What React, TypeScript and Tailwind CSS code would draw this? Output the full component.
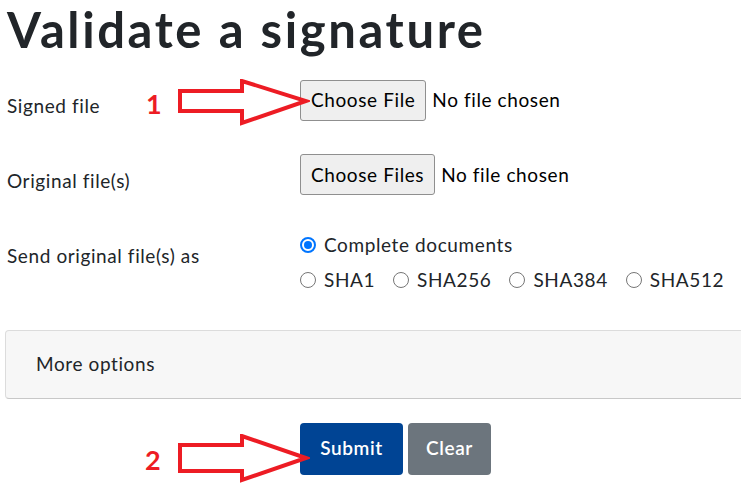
import React from "react";

const font = { fontFamily: '"Lato", "Noto Sans", sans-serif' };

function Radio({ checked, label }: { checked?: boolean; label: string }) {
  return (
    <span className="flex items-center gap-[8px]">
      {checked ? (
        <span className="flex h-[16px] w-[16px] items-center justify-center rounded-full border-2 border-[#0075ff] bg-white">
          <span className="h-[8px] w-[8px] rounded-full bg-[#0075ff]" />
        </span>
      ) : (
        <span className="h-[16px] w-[16px] rounded-full border border-[#767676] bg-white" />
      )}
      <span>{label}</span>
    </span>
  );
}

function FileInput({ label }: { label: string }) {
  return (
    <div className="flex items-center gap-[6px]">
      <span className="flex h-[41px] items-center rounded-[3px] border border-[#8f8f8f] bg-[#efefef] px-[10px] text-black">
        {label}
      </span>
      <span className="text-black">No file chosen</span>
    </div>
  );
}

function Arrow({ tall }: { tall?: boolean }) {
  const pts = tall
    ? "2,11 64,11 64,2 128,24 64,46 64,37 2,37"
    : "2,12 64,12 64,2 128,22 64,44 64,32 2,32";
  return (
    <svg width="132" height="50" viewBox="0 0 132 50">
      <polygon points={pts} fill="none" stroke="#ed1c24" strokeWidth="4" strokeLinejoin="miter" />
    </svg>
  );
}

export default function App() {
  return (
    <div className="relative flex h-[483px] w-[741px] flex-col overflow-hidden bg-white text-[19px] tracking-[0.6px] text-[#212529]" style={font}>
      <h1 className="ml-[7px] text-[49px] font-bold leading-[59px] tracking-[2.6px]">Validate a signature</h1>

      <div className="ml-[7px] mt-[21px] flex">
        <div className="w-[293px] pt-[12px]">Signed file</div>
        <FileInput label="Choose File" />
      </div>

      <div className="ml-[7px] mt-[33px] flex">
        <div className="w-[293px] pt-[13px]">Original file(s)</div>
        <FileInput label="Choose Files" />
      </div>

      <div className="ml-[7px] mt-[35px] flex">
        <div className="w-[293px] pt-[11px]">Send original file(s) as</div>
        <div className="flex flex-col gap-[7px] text-[19px] leading-[28px]">
          <Radio checked label="Complete documents" />
          <div className="flex gap-[18px]">
            <Radio label="SHA1" />
            <Radio label="SHA256" />
            <Radio label="SHA384" />
            <Radio label="SHA512" />
          </div>
        </div>
      </div>

      <div className="ml-[5px] mt-[36px] flex h-[69px] w-[760px] shrink-0 items-center rounded-[4px] border border-[#dcdcdc] border-b-[#c8c8c8] bg-[#f7f7f7] pl-[30px]">
        More options
      </div>

      <div className="ml-[300px] mt-[24px] flex gap-[5px] font-semibold text-white">
        <button className="h-[52px] w-[103px] rounded-[4px] bg-[#004494] tracking-[0.6px]">Submit</button>
        <button className="h-[52px] w-[83px] rounded-[4px] bg-[#6c757d] tracking-[0.6px]">Clear</button>
      </div>

      <div className="absolute left-[146px] top-[84px] text-[27px] font-bold tracking-normal text-[#ed1c24]">1</div>
      <div className="absolute left-[178px] top-[79px]">
        <Arrow />
      </div>
      <div className="absolute left-[145px] top-[440px] text-[27px] font-bold tracking-normal text-[#ed1c24]">2</div>
      <div className="absolute left-[178px] top-[434px]">
        <Arrow tall />
      </div>
    </div>
  );
}
